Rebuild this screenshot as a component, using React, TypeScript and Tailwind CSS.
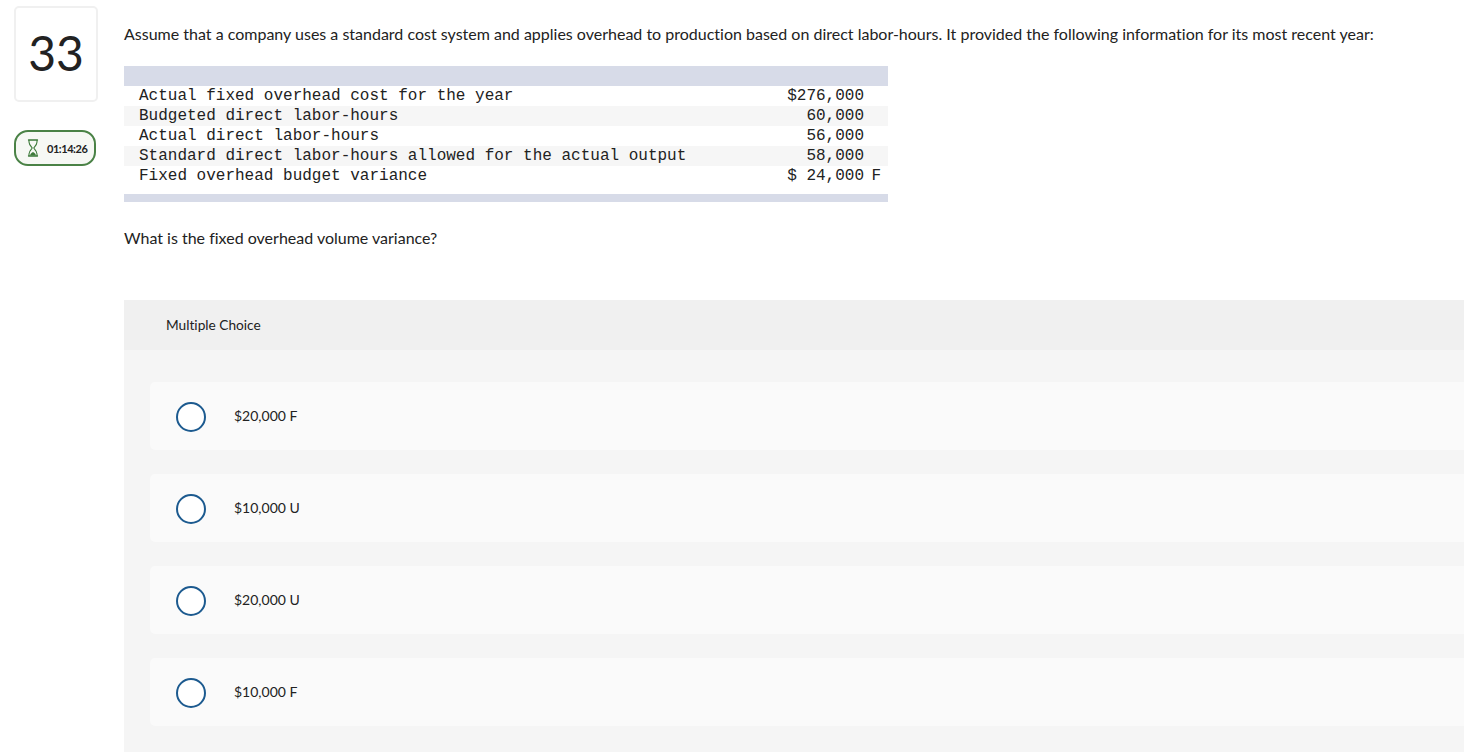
const rows = [
  { label: "Actual fixed overhead cost for the year", value: "$276,000", suffix: "" },
  { label: "Budgeted direct labor-hours", value: "60,000", suffix: "" },
  { label: "Actual direct labor-hours", value: "56,000", suffix: "" },
  { label: "Standard direct labor-hours allowed for the actual output", value: "58,000", suffix: "" },
  { label: "Fixed overhead budget variance", value: "$ 24,000", suffix: "F" },
]

const choices = ["$20,000 F", "$10,000 U", "$20,000 U", "$10,000 F"]

function Hourglass() {
  return (
    <svg width="12" height="18" viewBox="0 0 12 18" fill="none" className="shrink-0">
      <path d="M1.500 1h9M1.500 17h9" stroke="#3d7a3a" strokeWidth="1.300" strokeLinecap="round" />
      <path
        d="M2 1v2c0 2.500 1.500 4 3.200 6C3.500 11 2 12.500 2 15v2M10 1v2c0 2.500-1.500 4-3.200 6 1.700 2 3.200 3.500 3.200 6v2"
        stroke="#3d7a3a"
        strokeWidth="1.100"
      />
      <path d="M3 16.500c.2-1.500 1.300-2.700 3-3.500 1.700.8 2.800 2 3 3.500z" fill="#3d7a3a" />
    </svg>
  )
}

export default function App() {
  return (
    <div className="flex h-[752px] overflow-hidden bg-white font-['Lato',sans-serif] text-[#222222] [font-variant-ligatures:none]">
      {/* Sidebar */}
      <div className="w-[124px] shrink-0 pl-[14px] pt-[6px]">
        <div className="flex h-[96px] w-[84px] items-center justify-center rounded-[5px] border-2 border-[#f0f0f0] pb-[2px] text-[48px] leading-none">
          33
        </div>
        <div className="mt-[28px] flex h-[36px] w-[82px] items-center gap-[8px] rounded-[14px] border-2 border-[#4a8246] bg-[#f6f8f4] pl-[11px] text-[11px] font-bold tracking-[-0.45px]">
          <Hourglass />
          <span className="mt-[2px]">01:14:26</span>
        </div>
      </div>

      {/* Question */}
      <div className="min-w-0 flex-1">
        <p className="mt-[24px] whitespace-nowrap text-[16px] leading-[20px]">
          Assume that a company uses a standard cost system and applies overhead to production based on direct labor-hours. It provided the following information for its most recent year:
        </p>

        <div className="mt-[22px] w-[764px] font-['Liberation_Mono',monospace] text-[16px] leading-[20px]">
          <div className="h-[20px] bg-[#d7dbe8]" />
          {rows.map((row, i) => (
            <div
              key={row.label}
              className={`flex h-[20px] whitespace-pre pl-[15px] pr-[7px] ${i % 2 === 1 ? "bg-[#f6f6f6]" : "bg-white"}`}
            >
              <span className="flex-1">{row.label}</span>
              <span>{row.value}</span>
              <span className="w-[17px] text-right">{row.suffix}</span>
            </div>
          ))}
          <div className="mt-[8px] h-[8px] bg-[#d7dbe8]" />
        </div>

        <p className="mt-[26px] text-[16px] leading-[20px]">What is the fixed overhead volume variance?</p>

        {/* Answers */}
        <div className="mt-[52px] bg-[#f5f5f5] pb-[26px]">
          <div className="flex h-[50px] items-center bg-[#f0f0f0] pl-[42px] pt-[1px] text-[13.700px]">Multiple Choice</div>
          <div className="mt-[32px] flex flex-col gap-[24px] pl-[26px]">
            {choices.map((choice) => (
              <div key={choice} className="-mr-[10px] flex h-[68px] items-center rounded-[5px] bg-[#fafafa] pl-[26px] text-[14px]">
                <span className="mt-[2px] h-[30px] w-[30px] shrink-0 rounded-full border-2 border-[#1c5a8f] bg-white" />
                <span className="mb-[2px] ml-[28px]">{choice}</span>
              </div>
            ))}
          </div>
        </div>
      </div>
    </div>
  )
}
